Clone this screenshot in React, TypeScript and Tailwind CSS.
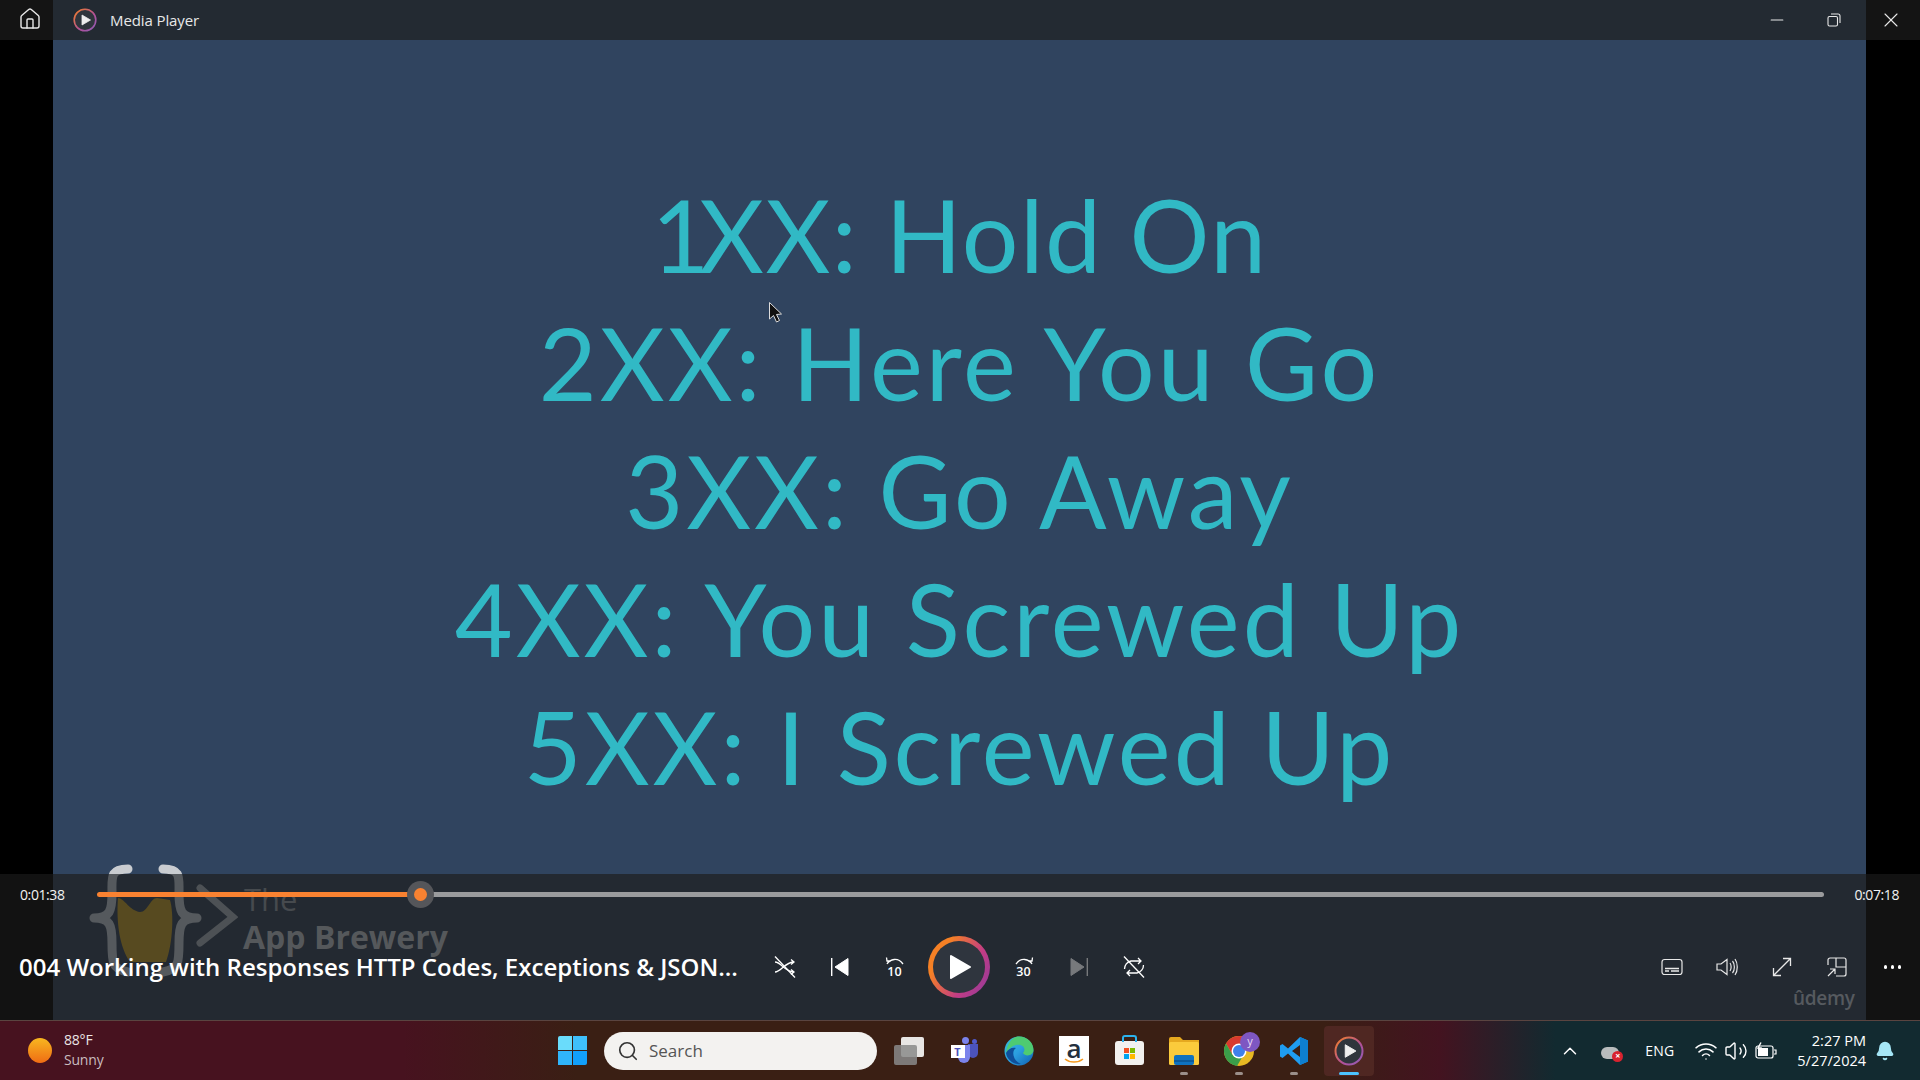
import { Home, Minus, X, Search, ChevronUp, Wifi, Volume2, Bell } from "lucide-react";

const slideLines = ["2XX: Here You Go", "3XX: Go Away", "4XX: You Screwed Up", "5XX: I Screwed Up"];

function PlayerLogo({ size }: { size: number }) {
    return (
        <svg width={size} height={size} viewBox="0 0 24 24">
            <defs>
                <linearGradient id={`ring${size}`} x1="0" y1="0" x2="1" y2="1">
                    <stop offset="0" stopColor="#f58025" />
                    <stop offset="0.6" stopColor="#b0509a" />
                    <stop offset="1" stopColor="#8e5fb8" />
                </linearGradient>
            </defs>
            <circle cx="12" cy="12" r="10.8" fill="#2f353c" stroke={`url(#ring${size})`} strokeWidth="1.6" />
            <path d="M9 7 L17.5 12 L9 17 Z" fill="#eeeeee" strokeLinejoin="round" stroke="#eeeeee" strokeWidth="0.8" />
        </svg>
    );
}

// the watermark is burned into the video, it shows brighter above the control bar
function Watermark() {
    return (
        <div className="absolute left-[88px] top-[-11px] w-[380px] h-[120px] pointer-events-none">
            <svg width="150" height="114" viewBox="0 0 150 114" fill="none">
                <defs>
                    <linearGradient id="brace" gradientUnits="userSpaceOnUse" x1="0" y1="0" x2="0" y2="114">
                        <stop offset="0.0965" stopColor="#c9ccd0" />
                        <stop offset="0.0965" stopColor="#55595d" />
                    </linearGradient>
                </defs>
                <path d="M30 35 C36 35 42 48 52 49 C60 49 62 35 69 35 L82 37 C86 50 85 80 78 99 L42 99 C32 85 28 60 30 35 Z" fill="#574a20" />
                <path d="M40 6 C22 6 24 14 24 30 C24 48 22 55 6 55 C22 55 24 62 24 80 C24 100 24 106 40 109" stroke="url(#brace)" strokeWidth="9" strokeLinecap="round" strokeLinejoin="round" />
                <path d="M75 6 C93 6 91 14 91 30 C91 48 93 55 109 55 C93 55 91 62 91 80 C91 100 91 106 75 109" stroke="url(#brace)" strokeWidth="9" strokeLinecap="round" strokeLinejoin="round" />
                <path d="M112 25 L145 54 L112 80" stroke="#4d5155" strokeWidth="7" strokeLinecap="round" />
            </svg>
            <span className="absolute left-[156px] top-[21px] text-[31px] leading-none font-['Open_Sans',sans-serif] text-[#464a4e]">The</span>
            <span className="absolute left-[155px] top-[58px] text-[32px] leading-none font-bold font-['Open_Sans',sans-serif] text-[#55585b]">App Brewery</span>
        </div>
    );
}

function Shuffle() {
    return (
        <svg width="24" height="24" viewBox="0 0 24 24" fill="none" stroke="white" strokeWidth="1.3">
            <path d="M2 7 C8 7 12 17 21 17 M2 17 C8 17 12 7 21 7 M18 4.5 L21 7 L18 9.5 M18 14.5 L21 17 L18 19.5" />
            <path d="M2 1.5 L22 22.5" />
        </svg>
    );
}

function Repeat() {
    return (
        <svg width="24" height="24" viewBox="0 0 24 24" fill="none" stroke="white" strokeWidth="1.3">
            <path d="M2.5 14 A8 8 0 0 1 9 6 L19 6 M16 3 L19 6 L16 9 M21.5 10 A8 8 0 0 1 15 18 L5 18 M8 15 L5 18 L8 21" />
            <path d="M2 1.5 L22 22.5" />
        </svg>
    );
}

function SeekIcon({ label, back }: { label: string; back?: boolean }) {
    return (
        <div className="w-[20px] h-[20px] flex flex-col items-center">
            <svg width="20" height="9" viewBox="0 0 20 9" fill="none" stroke="white" strokeWidth="1.3" className={back ? "" : "-scale-x-100"}>
                <path d="M2 7 C5 2 13 0 18 7 M1.5 0.5 L2 4 L6 4" />
            </svg>
            <span className="text-[12.5px] leading-[11px] font-semibold text-white font-['Open_Sans',sans-serif]">{label}</span>
        </div>
    );
}

function Slot({ children }: { children: React.ReactNode }) {
    return <div className="w-[55px] flex justify-center">{children}</div>;
}

function Controls() {
    return (
        <div className="relative h-[146px] bg-[linear-gradient(90deg,#121212_53px,#232931_53px,#232931_1866px,#121212_1866px)] flex flex-col">
            <Watermark />
            <div className="relative flex items-center h-[40px] pl-[20px] pr-[21px]">
                <span className="w-[77px] text-[14px] text-[#f2f2f2] font-['Open_Sans',sans-serif] tracking-[-0.4px]">0:01:38</span>
                <div className="flex-1 flex items-center">
                    <div className="w-[323px] h-[5px] rounded-full bg-[#f98231]" />
                    <div className="w-[27px] h-[27px] -mx-[13px] shrink-0 rounded-full bg-[#55565a] flex items-center justify-center relative">
                        <div className="w-[13px] h-[13px] rounded-full bg-[#f98231]" />
                    </div>
                    <div className="flex-1 ml-[4px] h-[5px] rounded-full bg-[#9a9b9d]" />
                </div>
                <span className="w-[75px] text-right text-[14px] text-[#f2f2f2] font-['Open_Sans',sans-serif] tracking-[-0.4px]">0:07:18</span>
            </div>
            <div className="relative flex items-center flex-1">
                <div className="w-[757px] pl-[19px] text-[24px] font-semibold text-white whitespace-nowrap font-['Open_Sans',sans-serif]">
                    004 Working with Responses HTTP Codes, Exceptions &amp; JSON...
                </div>
                <div className="flex items-center">
                    <Slot><Shuffle /></Slot>
                    <Slot>
                        <svg width="20" height="20" viewBox="0 0 20 20" fill="white">
                            <rect x="1" y="1" width="1.4" height="18" />
                            <path d="M18 1.5 V18.5 L5 10 Z" strokeLinejoin="round" stroke="white" />
                        </svg>
                    </Slot>
                    <Slot><SeekIcon label="10" back /></Slot>
                    <div className="w-[74px] flex justify-center">
                        <div className="w-[62px] h-[62px] rounded-full bg-[linear-gradient(120deg,#f58025_25%,#c23c85_65%,#8d3a9e)] p-[5px]">
                            <div className="w-full h-full rounded-full bg-[#2f353e] flex items-center justify-center">
                                <svg width="26" height="26" viewBox="0 0 26 26" fill="white" className="ml-[2px]">
                                    <path d="M4 2 L23 13 L4 24 Z" strokeLinejoin="round" stroke="white" strokeWidth="2" />
                                </svg>
                            </div>
                        </div>
                    </div>
                    <Slot><SeekIcon label="30" /></Slot>
                    <Slot>
                        <svg width="20" height="20" viewBox="0 0 20 20" fill="#77797c">
                            <rect x="17.6" y="1" width="1.4" height="18" />
                            <path d="M2 1.5 V18.5 L15 10 Z" stroke="#77797c" strokeLinejoin="round" />
                        </svg>
                    </Slot>
                    <Slot><Repeat /></Slot>
                </div>
                <div className="ml-auto flex items-center text-white pr-[19px]">
                    <svg width="22" height="18" viewBox="0 0 22 18" fill="none" stroke="#e8e8e8" strokeWidth="1.2">
                        <rect x="1" y="1.5" width="20" height="15" rx="2.5" />
                        <path d="M4 10.5 H18 M4 13 H8 M10 13 H18" strokeWidth="1.4" />
                    </svg>
                    <svg width="22" height="22" viewBox="0 0 22 22" fill="none" stroke="#e8e8e8" strokeWidth="1.2" className="ml-[33px]">
                        <path d="M1 8 H5 L11 3.5 V18.5 L5 14 H1 Z M14 7 C15.5 9 15.5 13 14 15 M16.5 5 C19 8 19 14 16.5 17 M19 3 C22 7 22 15 19 19" />
                    </svg>
                    <svg width="20" height="20" viewBox="0 0 20 20" fill="none" stroke="#e8e8e8" strokeWidth="1.3" className="ml-[34px]">
                        <path d="M1.5 18.5 L18.5 1.5 M11 1.5 H18.5 V9 M1.5 11 V18.5 H9" />
                    </svg>
                    <svg width="20" height="20" viewBox="0 0 20 20" fill="none" stroke="#e8e8e8" strokeWidth="1.2" className="ml-[35px]">
                        <path d="M1 8 V3 A2 2 0 0 1 3 1 H17 A2 2 0 0 1 19 3 V17 A2 2 0 0 1 17 19 H9 M9 1 V10 H19 M1 19 L8 12 M3 12 H8 V17" />
                    </svg>
                    <div className="ml-[37px] flex gap-[3.5px]">
                        <span className="w-[3.5px] h-[3.5px] rounded-full bg-white" />
                        <span className="w-[3.5px] h-[3.5px] rounded-full bg-white" />
                        <span className="w-[3.5px] h-[3.5px] rounded-full bg-white" />
                    </div>
                </div>
            </div>
            <span className="absolute left-[1793px] top-[115px] text-[19px] font-semibold leading-none text-[#565a5f] font-['Open_Sans',sans-serif] tracking-[-0.3px]">ûdemy</span>
        </div>
    );
}

function Dot({ active }: { active?: boolean }) {
    return <span className={active ? "absolute bottom-[1px] left-1/2 -translate-x-1/2 w-[20px] h-[3px] rounded-full bg-[#4cc2ff]" : "absolute bottom-[1px] left-1/2 -translate-x-1/2 w-[8px] h-[3px] rounded-full bg-[#9b8f8a]"} />;
}

function TaskIcon({ children, active, dot }: { children: React.ReactNode; active?: boolean; dot?: boolean }) {
    return (
        <div className={`relative w-[50px] h-[50px] flex items-center justify-center rounded-[4px] ${active ? "bg-[#4f2722]" : ""}`}>
            {children}
            {dot && <Dot />}
            {active && <Dot active />}
        </div>
    );
}

function Taskbar() {
    return (
        <div className="h-[60px] flex items-center border-t border-[#5a4440] bg-[linear-gradient(90deg,#47121f_0%,#47121f_21%,#3a1f14_30%,#3a1f14_69%,#431320_75%,#122a30_81%,#122a30_100%)]">
            <div className="w-[540px] flex items-center pl-[28px]">
                <div className="w-[24px] h-[25px] rounded-[50%] bg-[linear-gradient(180deg,#f8b720,#ef6c14)]" />
                <div className="ml-[12px] -mt-[2px] text-[14px] leading-[20px] font-['Open_Sans',sans-serif] tracking-[-0.2px]">
                    <div className="text-[#ece5e6]">88°F</div>
                    <div className="text-[#c9bcbf]">Sunny</div>
                </div>
            </div>
            <div className="w-[64px] pl-[18px]">
                <div className="grid grid-cols-2 gap-[1px] w-[29px] h-[29px]">
                    <span className="bg-[#6adcfb] rounded-tl-[2px]" />
                    <span className="bg-[#3fc0fb]" />
                    <span className="bg-[#30b5fb]" />
                    <span className="bg-[#12a0fb] rounded-br-[2px]" />
                </div>
            </div>
            <div className="w-[273px] h-[38px] rounded-full bg-[#f3f2f0] flex items-center pl-[13px] text-[#555] text-[17px] font-['Open_Sans',sans-serif]">
                <Search size={22} strokeWidth={1.8} color="#333" />
                <span className="ml-[10px]">Search</span>
            </div>
            <div className="ml-[7px] flex items-center gap-[5px] h-full">
                <TaskIcon>
                    <div className="relative w-[30px] h-[28px]">
                        <div className="absolute right-0 top-0 w-[23px] h-[20px] rounded-[2px] bg-[#e8e6e4]" />
                        <div className="absolute left-0 bottom-0 w-[23px] h-[20px] rounded-[2px] bg-[#8a8a8a]/85" />
                    </div>
                </TaskIcon>
                <TaskIcon>
                    <div className="relative w-[27px] h-[24px]">
                        <div className="absolute right-0 top-[5px] w-[10px] h-[14px] rounded-b-full bg-[#4b53bc]" />
                        <div className="absolute right-[8px] top-[6px] w-[12px] h-[18px] rounded-b-full bg-[#7b83eb]" />
                        <div className="absolute right-[1px] top-0 w-[5px] h-[5px] rounded-full bg-[#5059c9]" />
                        <div className="absolute right-[9px] top-[-2px] w-[7px] h-[7px] rounded-full bg-[#7b83eb]" />
                        <div className="absolute left-0 top-[6px] w-[14px] h-[13px] bg-white text-[#4b53bc] text-[11px] leading-[13px] font-bold text-center font-['Open_Sans',sans-serif]">T</div>
                    </div>
                </TaskIcon>
                <TaskIcon>
                    <svg width="30" height="30" viewBox="0 0 30 30">
                        <defs>
                            <linearGradient id="edge" x1="0" y1="0" x2="1" y2="1">
                                <stop offset="0" stopColor="#37c0d8" />
                                <stop offset="0.5" stopColor="#2b9ee0" />
                                <stop offset="1" stopColor="#0f5fb0" />
                            </linearGradient>
                        </defs>
                        <circle cx="15" cy="15" r="14.5" fill="url(#edge)" />
                        <path d="M15 0.5 C24 0.5 29.5 7 29.5 14 C29.5 20 21 21 19 17 C23 12 18 8 12 9 C8 10 4 13 2 17 C3 8 8 0.5 15 0.5 Z" fill="#4ecb72" />
                        <path d="M12 12 C7 15 9 25 17 28 C10 29 3 24 2 17 C4 13 8 11 12 12 Z" fill="#0f4f9a" />
                    </svg>
                </TaskIcon>
                <TaskIcon>
                    <div className="relative w-[30px] h-[30px] bg-white flex justify-center">
                        <span className="text-[26px] leading-[24px] font-semibold text-[#232f3e] font-['Open_Sans',sans-serif]">a</span>
                        <svg width="20" height="6" viewBox="0 0 20 6" className="absolute left-[5px] bottom-[2px]" fill="none">
                            <path d="M1 1 C6 5 14 5 19 1" stroke="#f79a1e" strokeWidth="1.6" />
                        </svg>
                    </div>
                </TaskIcon>
                <TaskIcon>
                    <div className="relative w-[29px] h-[24px] mt-[5px] rounded-[3px] bg-[#f2f1ef] flex items-center justify-center">
                        <div className="absolute -top-[6px] left-[7px] w-[15px] h-[7px] border-2 border-b-0 border-[#2bb3ee] rounded-t-[3px]" />
                        <div className="grid grid-cols-2 gap-[1px] w-[11px] h-[11px]">
                            <span className="bg-[#f25022]" /><span className="bg-[#7fba00]" /><span className="bg-[#00a4ef]" /><span className="bg-[#ffb900]" />
                        </div>
                    </div>
                </TaskIcon>
                <TaskIcon dot>
                    <svg width="30" height="28" viewBox="0 0 30 28">
                        <path d="M0 2 A2 2 0 0 1 2 0 H11 L14 3 H30 V9 H0 Z" fill="#e6a91f" />
                        <rect x="0" y="5" width="30" height="23" rx="1.5" fill="#fbcb3c" />
                        <rect x="5" y="18" width="20" height="10" rx="2" fill="#0f72c0" />
                        <rect x="5" y="23" width="20" height="2" fill="#0b5a9c" />
                    </svg>
                </TaskIcon>
                <TaskIcon dot>
                    <div className="relative">
                        <svg width="30" height="30" viewBox="0 0 30 30">
                            <circle cx="15" cy="15" r="15" fill="#e8b923" />
                            <path d="M15 0 A15 15 0 0 0 2 7.5 L8.5 19 L15 8 H28 A15 15 0 0 0 15 0 Z" fill="#d93a2f" />
                            <path d="M2 7.5 A15 15 0 0 0 13 29.9 L20 18 L15 15 L8.5 19 Z" fill="#3a9d4a" />
                            <circle cx="15" cy="15" r="7.5" fill="white" />
                            <circle cx="15" cy="15" r="6" fill="#3f80ea" />
                        </svg>
                        <div className="absolute -top-[4px] -right-[6px] w-[20px] h-[20px] rounded-full bg-[#7e57c2] text-[#e8dcf5] text-[11px] leading-[18px] text-center font-['Open_Sans',sans-serif]">y</div>
                    </div>
                </TaskIcon>
                <TaskIcon dot>
                    <svg width="30" height="30" viewBox="0 0 30 30">
                        <path d="M21 1 L29 4.5 V25.5 L21 29 L9 17.5 L3.5 22 L1 20.5 V9.5 L3.5 8 L9 12.5 Z M21 9 L13 15 L21 21 Z" fill="#1f9cf0" fillRule="evenodd" />
                        <path d="M21 1 L29 4.5 V25.5 L21 29 Z" fill="#0d7fd0" />
                    </svg>
                </TaskIcon>
                <TaskIcon active>
                    <PlayerLogo size={30} />
                </TaskIcon>
            </div>
            <div className="ml-auto flex items-center h-full text-white font-['Open_Sans',sans-serif]">
                <ChevronUp size={22} strokeWidth={1.6} />
                <div className="relative ml-[20px] w-[22px] h-[16px]">
                    <div className="absolute left-0 bottom-0 w-[18px] h-[12px] rounded-full bg-[#b9bcbd]" />
                    <div className="absolute right-0 bottom-[-3px] w-[11px] h-[11px] rounded-full bg-[#d8232f] text-[9px] leading-[10px] text-center text-white font-bold">×</div>
                </div>
                <span className="ml-[22px] text-[14px] tracking-[0.2px]">ENG</span>
                <Wifi size={24} strokeWidth={1.5} className="ml-[20px]" />
                <Volume2 size={24} strokeWidth={1.4} className="ml-[6px]" />
                <svg width="22" height="18" viewBox="0 0 22 18" fill="none" stroke="white" strokeWidth="1.2" className="ml-[7px]">
                    <rect x="1" y="4" width="17" height="12" rx="2" />
                    <rect x="3" y="6" width="10" height="8" fill="white" stroke="none" />
                    <path d="M19 8 H21 V12 H19" />
                    <path d="M6 0.5 L3 6 H6 L5 10" strokeWidth="1.4" />
                </svg>
                <div className="ml-[20px] text-right text-[14.5px] leading-[20px]">
                    <div>2:27 PM</div>
                    <div>5/27/2024</div>
                </div>
                <Bell size={20} fill="#a5e7f7" color="#a5e7f7" className="ml-[9px] mr-[25px]" />
            </div>
        </div>
    );
}

export default function App() {
    return (
        <div className="w-[1920px] h-[1080px] flex flex-col overflow-hidden bg-black">
            <div className="h-[40px] flex items-center bg-[linear-gradient(90deg,#141414_53px,#232a32_53px,#232a32_1866px,#141414_1866px)] text-[#e8e8e8]">
                <div className="w-[53px] pl-[7px] flex justify-center -mt-[2px]">
                    <Home size={24} strokeWidth={1.4} />
                </div>
                <div className="ml-[20px]"><PlayerLogo size={24} /></div>
                <span className="ml-[13px] text-[15px] font-['Open_Sans',sans-serif] tracking-[-0.1px]">Media Player</span>
                <div className="ml-auto flex items-center -mt-[1px]">
                    <Minus size={20} strokeWidth={1.3} />
                    <svg width="14" height="14" viewBox="0 0 14 14" fill="none" stroke="#e8e8e8" strokeWidth="1.1" className="ml-[40px]">
                        <rect x="1" y="3.5" width="9.5" height="9.5" rx="1.5" />
                        <path d="M4 1 H11 A2 2 0 0 1 13 3 V10" />
                    </svg>
                    <div className="w-[54px] ml-[25px] pr-[4px] flex justify-center">
                        <X size={24} strokeWidth={1.1} />
                    </div>
                </div>
            </div>
            <div className="flex-1 relative mx-[53px] w-[1813px] bg-[#30445f] flex flex-col items-center pt-[130px] text-[100px] leading-[128px] tracking-[3px] text-[#31b9c5] font-['Lato',sans-serif]">
                {/* Lato's 1 has a wide advance, this line is tightened to keep the reference's width */}
                <div className="h-[128px] whitespace-nowrap tracking-[1.5px]">
                    <span className="-mr-[12px]">1</span>XX: Hold On
                </div>
                {slideLines.map((line) => (
                    <div key={line} className="h-[128px] whitespace-nowrap">
                        {line}
                    </div>
                ))}
                <svg width="16" height="24" viewBox="0 0 16 24" className="absolute left-[715px] top-[261px]">
                    <path d="M1.5 1.5 V18 L5.5 14.5 L8.5 21 L11.5 19.5 L8.5 13.5 L13.5 13 Z" fill="#111" stroke="#ddd" strokeWidth="1" />
                </svg>
            </div>
            <Controls />
            <Taskbar />
        </div>
    );
}
